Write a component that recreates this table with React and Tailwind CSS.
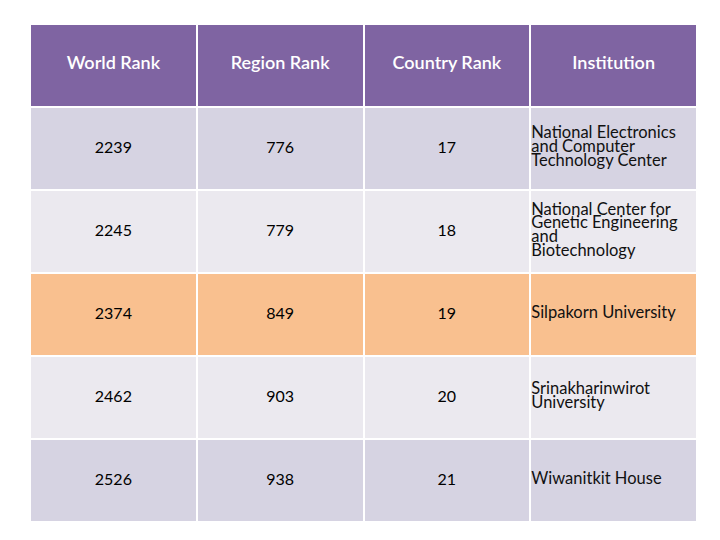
import React from "react";

const rows = [
  { w: "2239", r: "776", c: "17", name: ["National Electronics", "and Computer", "Technology Center"], bg: "bg-[#d6d3e2]" },
  { w: "2245", r: "779", c: "18", name: ["National Center for", "Genetic Engineering", "and", "Biotechnology"], bg: "bg-[#ebe9ef]" },
  { w: "2374", r: "849", c: "19", name: ["Silpakorn University"], bg: "bg-[#f9c08f]" },
  { w: "2462", r: "903", c: "20", name: ["Srinakharinwirot", "University"], bg: "bg-[#ebe9ef]" },
  { w: "2526", r: "938", c: "21", name: ["Wiwanitkit House"], bg: "bg-[#d6d3e2]" },
];

export default function App() {
  return (
    <div className="w-[720px] h-[540px] bg-white relative" style={{ fontFamily: "Lato, 'Open Sans', sans-serif" }}>
      <div className="pt-[25px] pl-[31px]">
        <div className="w-[665px] grid grid-cols-4 gap-[2px] grid-rows-[repeat(6,81px)]">
          {["World Rank", "Region Rank", "Country Rank", "Institution"].map((h) => (
            <div key={h} className="bg-[#7f64a2] text-white text-[18px] font-semibold flex items-center justify-center pb-[6px]">
              {h}
            </div>
          ))}
          {rows.map((row) => (
            <React.Fragment key={row.w}>
              <div className={`${row.bg} flex items-center justify-center text-[16px] text-black pb-[3px]`}>{row.w}</div>
              <div className={`${row.bg} flex items-center justify-center text-[16px] text-black pb-[3px]`}>{row.r}</div>
              <div className={`${row.bg} flex items-center justify-center text-[16px] text-black pb-[3px]`}>{row.c}</div>
              <div className={`${row.bg} flex flex-col justify-center text-[16.5px] leading-[13.7px] text-[#111] pb-[3px]`}>
                {row.name.map((l) => (
                  <span key={l} className="whitespace-nowrap">{l}</span>
                ))}
              </div>
            </React.Fragment>
          ))}
        </div>
      </div>
    </div>
  );
}
